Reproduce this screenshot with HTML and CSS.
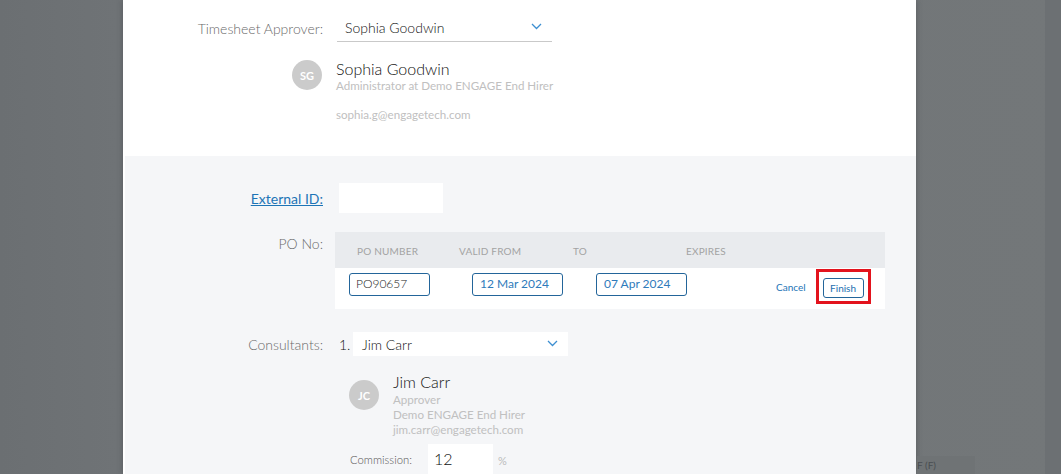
FILE: index.html
```html
<!DOCTYPE html>
<html>
<head>
<meta charset="utf-8">
<link rel="stylesheet" href="styles.css">
</head>
<body>
<div class="overlay">
  <div class="modal">
    <section class="top">
      <div class="row">
        <div class="label">Timesheet Approver:</div>
        <div class="select underline">
          <span>Sophia Goodwin</span>
          <svg class="chev" width="11" height="7" viewBox="0 0 11 7"><path d="M1 1l4.5 4.5L10 1" fill="none" stroke="#3d8fd1" stroke-width="1.3"/></svg>
        </div>
      </div>
      <div class="contact sg">
        <div class="avatar">SG</div>
        <div class="info">
          <div class="name">Sophia Goodwin</div>
          <div class="sub">Administrator at Demo ENGAGE End Hirer</div>
          <div class="sub email">sophia.g@engagetech.com</div>
        </div>
      </div>
    </section>
    <section class="grey">
      <div class="row ext">
        <div class="label"><a href="#">External ID:</a></div>
        <div class="ext-input"></div>
      </div>
      <div class="row po">
        <div class="label po-label">PO No:</div>
        <div class="po-table">
          <div class="po-head">
            <span class="c1">PO NUMBER</span>
            <span class="c2">VALID FROM</span>
            <span class="c3">TO</span>
            <span class="c4">EXPIRES</span>
          </div>
          <div class="po-row">
            <div class="box pon">PO90657</div>
            <div class="box date d1">12 Mar 2024</div>
            <div class="box date d2">07 Apr 2024</div>
            <a class="cancel" href="#">Cancel</a>
            <div class="highlight"><div class="finish">Finish</div></div>
          </div>
        </div>
      </div>
      <div class="row cons">
        <div class="label">Consultants:</div>
        <div class="num">1.</div>
        <div class="select white">
          <span>Jim Carr</span>
          <svg class="chev" width="11" height="7" viewBox="0 0 11 7"><path d="M1 1l4.5 4.5L10 1" fill="none" stroke="#3d8fd1" stroke-width="1.3"/></svg>
        </div>
      </div>
      <div class="contact jc">
        <div class="avatar">JC</div>
        <div class="info">
          <div class="name">Jim Carr</div>
          <div class="sub">Approver</div>
          <div class="sub">Demo ENGAGE End Hirer</div>
          <div class="sub">jim.carr@engagetech.com</div>
        </div>
      </div>
      <div class="commission">
        <span class="clabel">Commission:</span>
        <div class="cinput">12</div>
        <span class="pct">%</span>
      </div>
    </section>
  </div>
  <div class="side">
    <div class="side-box">F (F)</div>
  </div>
</div>
</body>
</html>
```
FILE: styles.css
```css
html, body {
  margin: 0;
  padding: 0;
  height: 100%;
  overflow: hidden;
}
body {
  font-family: Lato, "Open Sans", sans-serif;
  background: #707477;
}
.overlay {
  display: flex;
  height: 474px;
  padding-left: 123px;
  background: linear-gradient(90deg, #6b6f72 0%, #6f7376 11%, #737779 100%);
}
.modal {
  width: 793px;
  height: 474px;
  background: #fff;
  box-shadow: 0 0 6px rgba(40, 44, 48, 0.35);
  display: flex;
  flex-direction: column;
}
.top {
  height: 158px;
  padding-top: 14px;
  box-sizing: border-box;
}
.row {
  display: flex;
  align-items: center;
}
.label {
  width: 214px;
  box-sizing: border-box;
  padding-right: 14px;
  text-align: right;
  font-size: 14px;
  font-weight: 300;
  color: #6a6a6a;
  flex: none;
}
.select {
  display: flex;
  align-items: center;
  justify-content: space-between;
  box-sizing: border-box;
  width: 215px;
  padding: 0 10px 0 8px;
  font-size: 14px;
  font-weight: 300;
  color: #111;
}
.select.underline {
  height: 28px;
  border-bottom: 1px solid #c9c9c9;
}
.chev { flex: none; margin-top: -2px; }
.contact {
  display: flex;
  align-items: flex-start;
}
.avatar {
  width: 30px;
  height: 30px;
  border-radius: 50%;
  background: #cbcbcb;
  color: #fff;
  font-size: 11px;
  font-weight: 700;
  display: flex;
  align-items: center;
  justify-content: center;
  flex: none;
}
.name {
  font-size: 16px;
  line-height: 18px;
  color: #111;
  font-weight: 300;
}
.sub {
  font-size: 11.6px;
  color: #c0c0c0;
}
.sg {
  margin-left: 169px;
  margin-top: 18px;
}
.sg .info { margin-left: 14px; }
.sg .sub { line-height: 16px; }
.sg .email { margin-top: 13px; }
.grey {
  flex: 1;
  background: #f5f6f8;
  margin-left: 2px;
  padding-top: 27px;
}
.grey .label { width: 212px; }
.ext a {
  color: #1d74b6;
  text-decoration: underline;
  font-weight: 400;
}
.ext-input {
  width: 104px;
  height: 30px;
  margin-left: 2px;
  background: #fff;
}
.po {
  align-items: flex-start;
  margin-top: 19px;
}
.po-label {
  padding-top: 4px;
  line-height: 16px;
}
.po-table {
  width: 550px;
  margin-left: -2px;
}
.po-head {
  height: 36px;
  background: #e9ebee;
  display: grid;
  grid-template-columns: 102px 114px 113px 1fr;
  padding-left: 22px;
  align-items: center;
  font-size: 10px;
  color: #a3a3a3;
  letter-spacing: 0.2px;
  padding-top: 1px;
  box-sizing: border-box;
}
.po-row {
  height: 41px;
  background: #fff;
  display: flex;
  align-items: flex-start;
  padding-left: 14px;
}
.box {
  box-sizing: border-box;
  height: 23px;
  border: 1px solid #23659a;
  border-radius: 3px;
  font-size: 12px;
  line-height: 19px;
  padding-left: 6px;
  margin-top: 5px;
}
.pon { width: 81px; color: #222; font-weight: 300; }
.date { width: 91px; color: #2f7bbb; padding-left: 7px; }
.d1 { margin-left: 42px; }
.d2 { margin-left: 33px; }
.cancel {
  font-size: 10px;
  color: #1d74b6;
  text-decoration: none;
  margin-left: 89px;
  margin-top: 13px;
}
.highlight {
  margin-left: 10px;
  margin-top: 1px;
  width: 55px;
  height: 35px;
  box-sizing: border-box;
  border: 3px solid #e3131d;
  display: flex;
  align-items: center;
  justify-content: center;
}
.finish {
  box-sizing: border-box;
  width: 41px;
  height: 20px;
  border: 1px solid #23659a;
  border-radius: 3px;
  font-size: 10px;
  color: #1d6fb0;
  display: flex;
  align-items: center;
  justify-content: center;
  margin-top: 3px;
}
.cons { margin-top: 23px; }
.num {
  font-size: 14px;
  font-weight: 300;
  color: #111;
  margin-left: 2px;
  width: 14px;
}
.select.white {
  background: #fff;
  height: 24px;
  padding-left: 9px;
}
.jc {
  margin-left: 224px;
  margin-top: 17px;
}
.jc .avatar { margin-top: 7px; }
.jc .info { margin-left: 14px; }
.jc .sub { line-height: 15px; }
.jc .name { margin-bottom: 1px; }
.commission {
  display: flex;
  align-items: center;
  margin-left: 225px;
  margin-top: 7px;
}
.clabel {
  font-size: 11.3px;
  font-weight: 300;
  color: #555;
  width: 78px;
}
.cinput {
  width: 65px;
  height: 30px;
  background: #fff;
  box-sizing: border-box;
  padding-left: 6px;
  font-size: 16px;
  font-weight: 300;
  color: #111;
  line-height: 30px;
}
.pct {
  font-size: 11px;
  color: #bbb;
  margin-left: 5px;
  margin-top: 3px;
}
.side {
  flex: 1;
  display: flex;
  flex-direction: column;
  justify-content: flex-end;
  position: relative;
}
.side::after {
  content: "";
  position: absolute;
  right: 0;
  top: 0;
  width: 16px;
  height: 100%;
  background: #6c7073;
}
.side-box {
  width: 58px;
  height: 18px;
  margin-left: 1px;
  background: #6f7375;
  color: #4a4e52;
  font-size: 10px;
  line-height: 18px;
  overflow: hidden;
}
```
